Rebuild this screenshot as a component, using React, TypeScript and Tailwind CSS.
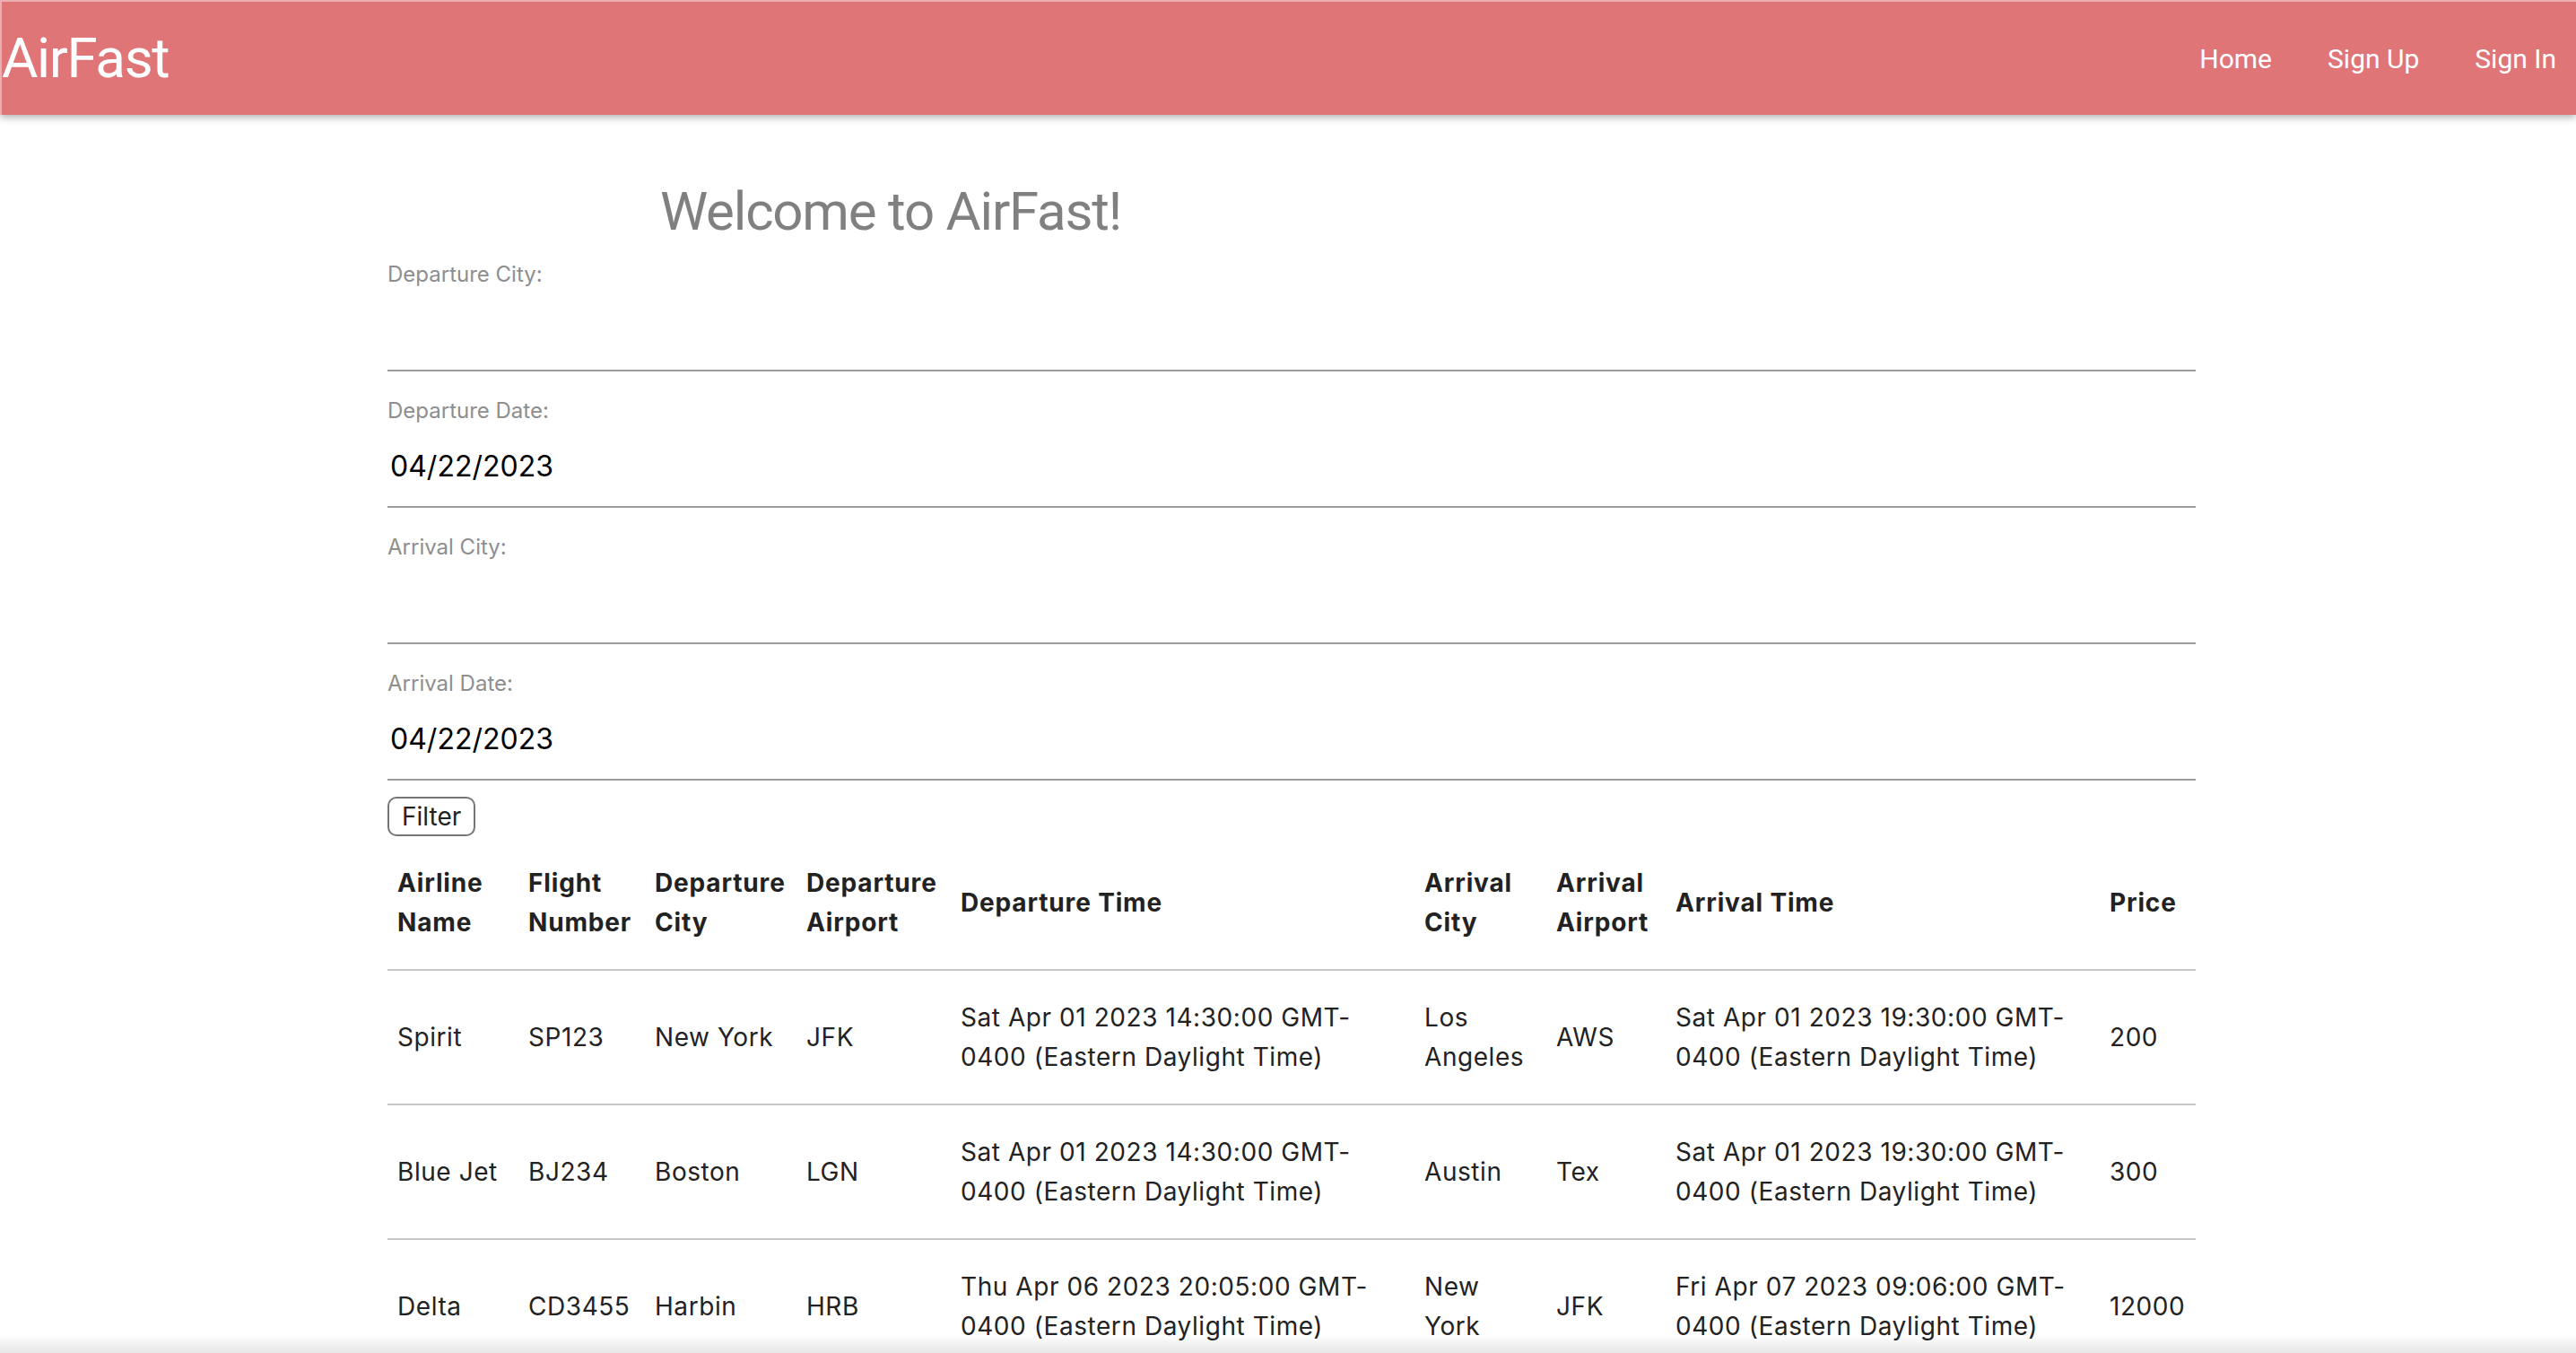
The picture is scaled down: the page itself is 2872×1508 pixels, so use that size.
import React from 'react'

const sans = "font-['Inter','Liberation_Sans',sans-serif]"
const roboto = "font-['Roboto','Liberation_Sans',sans-serif]"

type Flight = {
  airline: string
  number: string
  depCity: string[]
  depAirport: string
  depTime: string[]
  arrCity: string[]
  arrAirport: string
  arrTime: string[]
  price: string
}

const FLIGHTS: Flight[] = [
  {
    airline: 'Spirit',
    number: 'SP123',
    depCity: ['New York'],
    depAirport: 'JFK',
    depTime: ['Sat Apr 01 2023 14:30:00 GMT-', '0400 (Eastern Daylight Time)'],
    arrCity: ['Los', 'Angeles'],
    arrAirport: 'AWS',
    arrTime: ['Sat Apr 01 2023 19:30:00 GMT-', '0400 (Eastern Daylight Time)'],
    price: '200',
  },
  {
    airline: 'Blue Jet',
    number: 'BJ234',
    depCity: ['Boston'],
    depAirport: 'LGN',
    depTime: ['Sat Apr 01 2023 14:30:00 GMT-', '0400 (Eastern Daylight Time)'],
    arrCity: ['Austin'],
    arrAirport: 'Tex',
    arrTime: ['Sat Apr 01 2023 19:30:00 GMT-', '0400 (Eastern Daylight Time)'],
    price: '300',
  },
  {
    airline: 'Delta',
    number: 'CD3455',
    depCity: ['Harbin'],
    depAirport: 'HRB',
    depTime: ['Thu Apr 06 2023 20:05:00 GMT-', '0400 (Eastern Daylight Time)'],
    arrCity: ['New', 'York'],
    arrAirport: 'JFK',
    arrTime: ['Fri Apr 07 2023 09:06:00 GMT-', '0400 (Eastern Daylight Time)'],
    price: '12000',
  },
]

const HEADERS: string[][] = [
  ['Airline', 'Name'],
  ['Flight', 'Number'],
  ['Departure', 'City'],
  ['Departure', 'Airport'],
  ['Departure Time'],
  ['Arrival', 'City'],
  ['Arrival', 'Airport'],
  ['Arrival Time'],
  ['Price'],
]

// column widths measured off the reference (sum = 2016)
const COL_WIDTHS = ['w-[146px]', 'w-[141px]', 'w-[169px]', 'w-[172px]', 'w-[517px]', 'w-[147px]', 'w-[133px]', 'w-[484px]', 'w-[107px]']

function Lines({ lines }: { lines: string[] }) {
  return (
    <>
      {lines.map((l, i) => (
        <React.Fragment key={i}>
          {i > 0 && <br />}
          {l}
        </React.Fragment>
      ))}
    </>
  )
}

function Field({ label, value }: { label: string; value?: string }) {
  return (
    <div className="flex h-[152px] flex-col border-b-2 border-[#9b9b9b]">
      <label className="pt-[32px] text-[24px] leading-none text-[#8e8e8e]">{label}</label>
      <div className="mt-[34px] h-[32px] pl-[3px] text-[32px] leading-none text-black">{value}</div>
    </div>
  )
}

export default function App() {
  return (
    <div className={`relative min-h-screen bg-white ${sans}`}>
      <header
        className={`flex h-[128px] items-center justify-between border-l-2 border-t-2 border-[#eab0b1] bg-[#df7577] text-white shadow-[0_3px_8px_rgba(0,0,0,0.3)] ${roboto}`}
      >
        <div className="text-[62px] leading-none tracking-[-0.022em]">AirFast</div>
        <nav className="flex gap-[62px] pr-[22px] pt-[2px] text-[30px] leading-none">
          <a>Home</a>
          <a>Sign Up</a>
          <a>Sign In</a>
        </nav>
      </header>

      <main className="ml-[432px] w-[2016px]">
        <h1
          className={`ml-[304px] mt-[83px] mb-[1px] h-[50px] text-[60px] leading-[50px] tracking-[-0.02em] text-[#808080] ${roboto}`}
        >
          Welcome to AirFast!
        </h1>

        <Field label="Departure City:" />
        <Field label="Departure Date:" value="04/22/2023" />
        <Field label="Arrival City:" />
        <Field label="Arrival Date:" value="04/22/2023" />

        <button className="mt-[18px] h-[44px] rounded-[10px] border-2 border-[#767676] px-[14px] text-[28px] leading-[40px] text-[#222]">
          Filter
        </button>

        <table className="w-[2016px] table-fixed border-collapse text-[28px] leading-[44px] text-[#222]">
          <thead>
            <tr className="border-b-2 border-[#c8c8c8]">
              {HEADERS.map((h, i) => (
                <th
                  key={i}
                  className={`${COL_WIDTHS[i]} whitespace-nowrap py-[30px] pl-[11px] text-left align-middle font-bold tracking-[0.03em]`}
                >
                  <Lines lines={h} />
                </th>
              ))}
            </tr>
          </thead>
          <tbody>
            {FLIGHTS.map((f) => {
              const cells: string[][] = [
                [f.airline],
                [f.number],
                f.depCity,
                [f.depAirport],
                f.depTime,
                f.arrCity,
                [f.arrAirport],
                f.arrTime,
                [f.price],
              ]
              return (
                <tr key={f.number} className="border-b-2 border-[#c8c8c8]">
                  {cells.map((c, i) => (
                    <td key={i} className="whitespace-nowrap py-[30px] pl-[11px] align-middle tracking-[0.02em]">
                      <Lines lines={c} />
                    </td>
                  ))}
                </tr>
              )
            })}
          </tbody>
        </table>
      </main>

      <div className="pointer-events-none fixed inset-x-0 bottom-0 h-[20px] bg-gradient-to-b from-transparent to-black/10" />
    </div>
  )
}
